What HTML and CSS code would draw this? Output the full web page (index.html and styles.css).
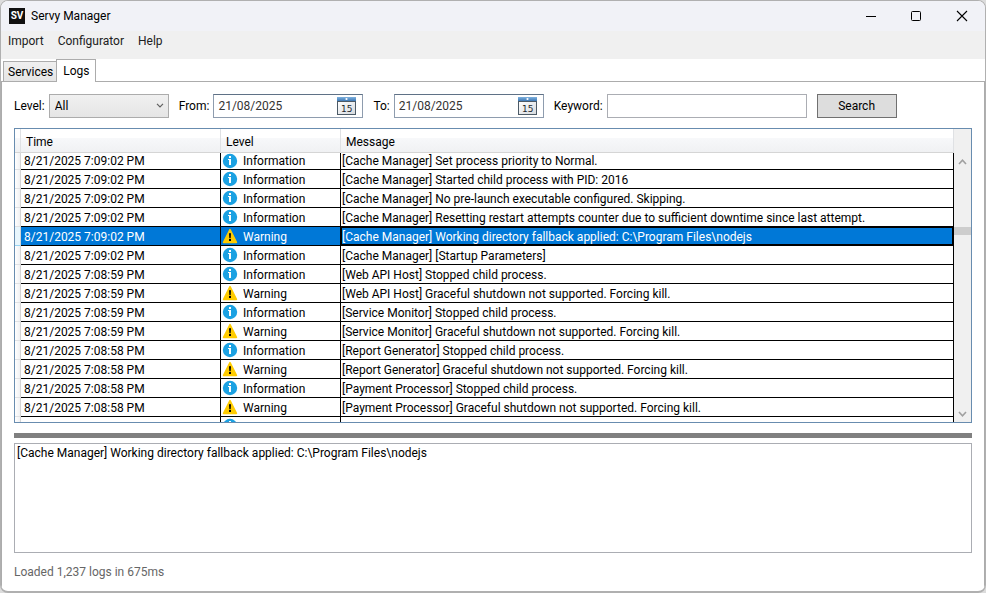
FILE: index.html
```
<!DOCTYPE html>
<html lang="en">
<head>
    <meta charset="UTF-8">
    <meta name="viewport" content="width=device-width, initial-scale=1.0">
    <title>Servy Manager</title>
    <link rel="stylesheet" href="styles.css">
</head>
<body>
    <svg class="sprite" width="0" height="0" aria-hidden="true">
        <symbol id="icon-info" viewBox="0 0 16 16">
            <circle cx="8" cy="8" r="7.2" fill="#1ba1e2"/>
            <rect x="7" y="3" width="2" height="2" fill="#fff"/>
            <path d="M6 6h3v6H7V7H6z" fill="#fff"/>
        </symbol>
        <symbol id="icon-warning" viewBox="0 0 16 16">
            <path d="M8 1.6L14.4 14.4H1.6z" fill="#ffcc00" stroke="#ffcc00" stroke-width="1.6" stroke-linejoin="round"/>
            <path d="M7 5.2h2l-.3 5H7.3z" fill="#000"/>
            <rect x="7" y="11" width="2" height="2" fill="#000"/>
        </symbol>
        <symbol id="icon-calendar" viewBox="0 0 20 19">
            <defs>
                <linearGradient id="cal-top" x1="0" y1="0" x2="0" y2="1">
                    <stop offset="0" stop-color="#7fb2df"/>
                    <stop offset="1" stop-color="#3f79b5"/>
                </linearGradient>
                <linearGradient id="cal-body" x1="0" y1="0" x2="1" y2="1">
                    <stop offset="0" stop-color="#fff"/>
                    <stop offset="1" stop-color="#d5d9dd"/>
                </linearGradient>
            </defs>
            <rect x=".5" y="4.5" width="18" height="13" fill="url(#cal-body)" stroke="#4c5a66"/>
            <rect x="0" y="0" width="19" height="4" fill="url(#cal-top)"/>
            <circle cx="9.5" cy="2" r="1.1" fill="#fff"/>
        </symbol>
    </svg>

    <div class="window">
        <header class="title-bar">
            <span class="app-icon">SV</span>
            <h1 class="app-title">Servy Manager</h1>
            <div class="window-buttons">
                <button class="window-btn" aria-label="Minimize">
                    <svg width="12" height="12" viewBox="0 0 12 12" fill="none" stroke="#000"><path d="M2 6.5h10"/></svg>
                </button>
                <button class="window-btn" aria-label="Maximize">
                    <svg width="12" height="12" viewBox="0 0 12 12" fill="none" stroke="#000"><rect x="1.5" y="1.5" width="9" height="9" rx="1"/></svg>
                </button>
                <button class="window-btn" aria-label="Close">
                    <svg width="12" height="12" viewBox="0 0 12 12" fill="none" stroke="#000" stroke-width="1.1"><path d="M1 1l10 10M11 1L1 11"/></svg>
                </button>
            </div>
        </header>

        <nav class="menu-bar">
            <a href="#" class="menu-link">Import</a>
            <a href="#" class="menu-link">Configurator</a>
            <a href="#" class="menu-link">Help</a>
        </nav>

        <div class="tabs" role="tablist">
            <button class="tab" role="tab" aria-selected="false">Services</button>
            <button class="tab active" role="tab" aria-selected="true">Logs</button>
        </div>

        <main class="panel">
            <form class="filters">
                <label for="level">Level:</label>
                <div class="select-box">
                    <select id="level" class="level-select">
                        <option>All</option>
                        <option>Information</option>
                        <option>Warning</option>
                        <option>Error</option>
                    </select>
                    <svg class="select-arrow" width="8" height="5" viewBox="0 0 8 5" fill="none" stroke="#606060" stroke-width="1.2"><path d="M1 .8l3 3 3-3"/></svg>
                </div>
                <label for="from">From:</label>
                <div class="date-box">
                    <input type="text" id="from" class="date-input" value="21/08/2025">
                    <button type="button" class="date-btn" aria-label="Pick start date"><svg width="20" height="19"><use href="#icon-calendar"/><text x="4" y="15" class="cal-day">15</text></svg></button>
                </div>
                <label for="to">To:</label>
                <div class="date-box">
                    <input type="text" id="to" class="date-input" value="21/08/2025">
                    <button type="button" class="date-btn" aria-label="Pick end date"><svg width="20" height="19"><use href="#icon-calendar"/><text x="4" y="15" class="cal-day">15</text></svg></button>
                </div>
                <label for="keyword">Keyword:</label>
                <input type="text" id="keyword" class="keyword-input">
                <button type="button" class="search-btn">Search</button>
            </form>

            <div class="log-grid">
                <div class="log-view">
                    <table class="log-table">
                        <colgroup>
                            <col class="col-handle">
                            <col class="col-time">
                            <col class="col-level">
                            <col>
                        </colgroup>
                        <thead>
                            <tr><td class="corner"></td><th>Time</th><th>Level</th><th>Message</th></tr>
                        </thead>
                        <tbody>
                            <tr class="cut"><td class="handle"></td><td>8/21/2025 7:09:02 PM</td><td><svg class="icon"><use href="#icon-info"/></svg>Information</td><td>[Cache Manager] Set process priority to Normal.</td></tr>
                            <tr><td class="handle"></td><td>8/21/2025 7:09:02 PM</td><td><svg class="icon"><use href="#icon-info"/></svg>Information</td><td>[Cache Manager] Started child process with PID: 2016</td></tr>
                            <tr><td class="handle"></td><td>8/21/2025 7:09:02 PM</td><td><svg class="icon"><use href="#icon-info"/></svg>Information</td><td>[Cache Manager] No pre-launch executable configured. Skipping.</td></tr>
                            <tr><td class="handle"></td><td>8/21/2025 7:09:02 PM</td><td><svg class="icon"><use href="#icon-info"/></svg>Information</td><td>[Cache Manager] Resetting restart attempts counter due to sufficient downtime since last attempt.</td></tr>
                            <tr class="selected"><td class="handle"></td><td>8/21/2025 7:09:02 PM</td><td><svg class="icon"><use href="#icon-warning"/></svg>Warning</td><td class="focused">[Cache Manager] Working directory fallback applied: C:\Program Files\nodejs</td></tr>
                            <tr><td class="handle"></td><td>8/21/2025 7:09:02 PM</td><td><svg class="icon"><use href="#icon-info"/></svg>Information</td><td>[Cache Manager] [Startup Parameters]</td></tr>
                            <tr><td class="handle"></td><td>8/21/2025 7:08:59 PM</td><td><svg class="icon"><use href="#icon-info"/></svg>Information</td><td>[Web API Host] Stopped child process.</td></tr>
                            <tr><td class="handle"></td><td>8/21/2025 7:08:59 PM</td><td><svg class="icon"><use href="#icon-warning"/></svg>Warning</td><td>[Web API Host] Graceful shutdown not supported. Forcing kill.</td></tr>
                            <tr><td class="handle"></td><td>8/21/2025 7:08:59 PM</td><td><svg class="icon"><use href="#icon-info"/></svg>Information</td><td>[Service Monitor] Stopped child process.</td></tr>
                            <tr><td class="handle"></td><td>8/21/2025 7:08:59 PM</td><td><svg class="icon"><use href="#icon-warning"/></svg>Warning</td><td>[Service Monitor] Graceful shutdown not supported. Forcing kill.</td></tr>
                            <tr><td class="handle"></td><td>8/21/2025 7:08:58 PM</td><td><svg class="icon"><use href="#icon-info"/></svg>Information</td><td>[Report Generator] Stopped child process.</td></tr>
                            <tr><td class="handle"></td><td>8/21/2025 7:08:58 PM</td><td><svg class="icon"><use href="#icon-warning"/></svg>Warning</td><td>[Report Generator] Graceful shutdown not supported. Forcing kill.</td></tr>
                            <tr><td class="handle"></td><td>8/21/2025 7:08:58 PM</td><td><svg class="icon"><use href="#icon-info"/></svg>Information</td><td>[Payment Processor] Stopped child process.</td></tr>
                            <tr><td class="handle"></td><td>8/21/2025 7:08:58 PM</td><td><svg class="icon"><use href="#icon-warning"/></svg>Warning</td><td>[Payment Processor] Graceful shutdown not supported. Forcing kill.</td></tr>
                            <tr><td class="handle"></td><td></td><td><svg class="icon"><use href="#icon-info"/></svg></td><td></td></tr>
                        </tbody>
                    </table>
                </div>
                <div class="scrollbar" aria-hidden="true">
                    <svg width="9" height="6" viewBox="0 0 9 6" fill="none" stroke="#a0a0a0" stroke-width="1.6"><path d="M1 5l3.500-3.800L8 5"/></svg>
                    <div class="scroll-track"><div class="scroll-thumb"></div></div>
                    <svg width="9" height="6" viewBox="0 0 9 6" fill="none" stroke="#a0a0a0" stroke-width="1.6"><path d="M1 1l3.500 3.800L8 1"/></svg>
                </div>
            </div>

            <div class="splitter"></div>

            <textarea class="details" aria-label="Log message" readonly>[Cache Manager] Working directory fallback applied: C:\Program Files\nodejs</textarea>

            <p class="status">Loaded 1,237 logs in 675ms</p>
        </main>
    </div>
</body>
</html>
```
FILE: styles.css
```
:root {
    --border: #acacac;
    --grid-border: #688caf;
    --select: #0078d7;
    --chrome: #f0f0f0;
}

* {
    margin: 0;
    padding: 0;
    box-sizing: border-box;
}

body {
    height: 100vh;
    background: #dcdcdc;
    font-family: "Segoe UI", Roboto, sans-serif;
    font-size: 12px;
    line-height: 16px;
    color: #000;
}

button, input, select, textarea {
    font: inherit;
    color: inherit;
    border-radius: 0;
}

.sprite {
    position: absolute;
}

.window {
    height: 100%;
    display: flex;
    flex-direction: column;
    background: #fff;
    border: 1px solid #b0b0b0;
    border-bottom-width: 2px;
    border-radius: 8px;
    overflow: hidden;
}

.title-bar {
    height: 30px;
    flex: none;
    display: flex;
    align-items: center;
    gap: 6px;
    padding-left: 8px;
    background: #f1f2f7;
}

.app-icon {
    width: 16px;
    height: 16px;
    background: #111;
    color: #fff;
    font-size: 10px;
    font-weight: 700;
    line-height: 16px;
    text-align: center;
}

.app-title {
    font-size: 12px;
    font-weight: 400;
}

.window-buttons {
    display: flex;
    margin-left: auto;
}

.window-btn {
    width: 46px;
    height: 30px;
    display: flex;
    align-items: center;
    justify-content: center;
    border: none;
    background: none;
}

.menu-bar {
    height: 28px;
    flex: none;
    display: flex;
    gap: 14px;
    padding: 2px 7px;
    background: var(--chrome);
}

.menu-link {
    color: #212121;
    text-decoration: none;
}

.tabs {
    height: 23px;
    flex: none;
    display: flex;
    align-items: flex-end;
    padding-left: 2px;
    border-bottom: 1px solid var(--border);
}

.tab {
    height: 20px;
    padding: 0 3px 0 4px;
    border: 1px solid var(--border);
    border-width: 1px 0 0 1px;
    background: linear-gradient(#f0f0f0, #e5e5e5);
}

.tab.active {
    height: 23px;
    margin-bottom: -1px;
    padding: 0 6px;
    border-right-width: 1px;
    background: #fff;
}

.panel {
    flex: 1;
    min-height: 0;
    display: flex;
    flex-direction: column;
    padding: 12px 12px 11px;
    border: 1px solid var(--border);
    border-width: 0 1px;
}

.filters {
    display: flex;
    align-items: center;
    margin-bottom: 10px;
}

.filters label {
    margin-right: 4px;
}

.select-box {
    position: relative;
    margin-right: 10px;
}

.level-select {
    width: 120px;
    height: 24px;
    padding-left: 5px;
    appearance: none;
    border: 1px solid var(--border);
    background: linear-gradient(#f0f0f0, #e5e5e5);
}

.select-arrow {
    position: absolute;
    top: 9px;
    right: 5px;
    pointer-events: none;
}

.date-box {
    width: 150px;
    height: 24px;
    display: flex;
    align-items: center;
    margin-right: 10px;
    border: 1px solid #8e9cae;
    border-top-color: #5f7186;
}

.date-input {
    flex: 1;
    min-width: 0;
    padding-left: 4px;
    border: none;
    color: #333;
}

.date-btn {
    width: 20px;
    height: 19px;
    margin-right: 5px;
    border: none;
    background: none;
}

.date-btn svg {
    display: block;
}

.cal-day {
    font-family: "DejaVu Sans", Verdana, sans-serif;
    font-size: 9px;
    fill: #22282e;
}

.keyword-input {
    width: 200px;
    height: 24px;
    margin-right: 10px;
    padding: 0 4px;
    border: 1px solid #abadb3;
}

.search-btn {
    width: 80px;
    height: 24px;
    border: 1px solid #707070;
    background: #ddd;
}

.log-grid {
    flex: 1;
    min-height: 0;
    display: flex;
    border: 1px solid var(--grid-border);
}

.log-view {
    flex: 1;
    min-width: 0;
    overflow: hidden;
}

.log-table {
    width: 100%;
    table-layout: fixed;
    border-collapse: separate;
    border-spacing: 0;
}

.col-handle {
    width: 6px;
}

.col-time {
    width: 200px;
}

.col-level {
    width: 120px;
}

.log-table th,
.corner {
    height: 24px;
    background: linear-gradient(#fff 40%, #f7f8fa 41%, #f0f1f3);
    border-right: 1px solid #dfe1e4;
    border-bottom: 1px solid #d5d5d5;
}

.log-table th {
    padding: 2px 5px 0;
    font-weight: 400;
    text-align: left;
}

.log-table tbody td {
    height: 19px;
    padding: 2px 1px 0 3px;
    line-height: 16px;
    white-space: nowrap;
    overflow: hidden;
    border-right: 1px solid #000;
    border-bottom: 1px solid #000;
}

.log-table tbody td:last-child {
    padding-left: 1px;
}

.log-table tbody .cut td {
    height: 17px;
    padding-top: 0;
}

.log-table tbody .handle {
    padding: 0;
    background: linear-gradient(90deg, #fff, #f0f1f3);
    border-right-color: #d5d5d5;
    border-bottom-color: #dfe1e4;
}

.selected td {
    background: var(--select);
    color: #fff;
}

.log-table .selected .handle {
    background: #e8f6fd;
    border-bottom-color: #98d4f2;
}

.log-table .focused {
    box-shadow: inset 0 0 0 1px #000;
}

.icon {
    width: 16px;
    height: 16px;
    display: inline-block;
    margin: -1px 5px 0 -2px;
    vertical-align: top;
}

.cut .icon {
    margin-top: 0;
}

.scrollbar {
    width: 17px;
    display: flex;
    flex-direction: column;
    align-items: center;
    padding: 30px 0 5px;
    background: var(--chrome);
}

.scroll-track {
    flex: 1;
    width: 100%;
    padding-top: 62px;
}

.scroll-thumb {
    height: 8px;
    background: #cdcdcd;
}

.splitter {
    height: 5px;
    flex: none;
    margin: 10px 0 5px;
    background: #808080;
}

.details {
    height: 110px;
    flex: none;
    padding: 1px 2px;
    border: 1px solid #abadb3;
    resize: none;
    outline: none;
}

.status {
    margin-top: 11px;
    color: #666;
}
```
